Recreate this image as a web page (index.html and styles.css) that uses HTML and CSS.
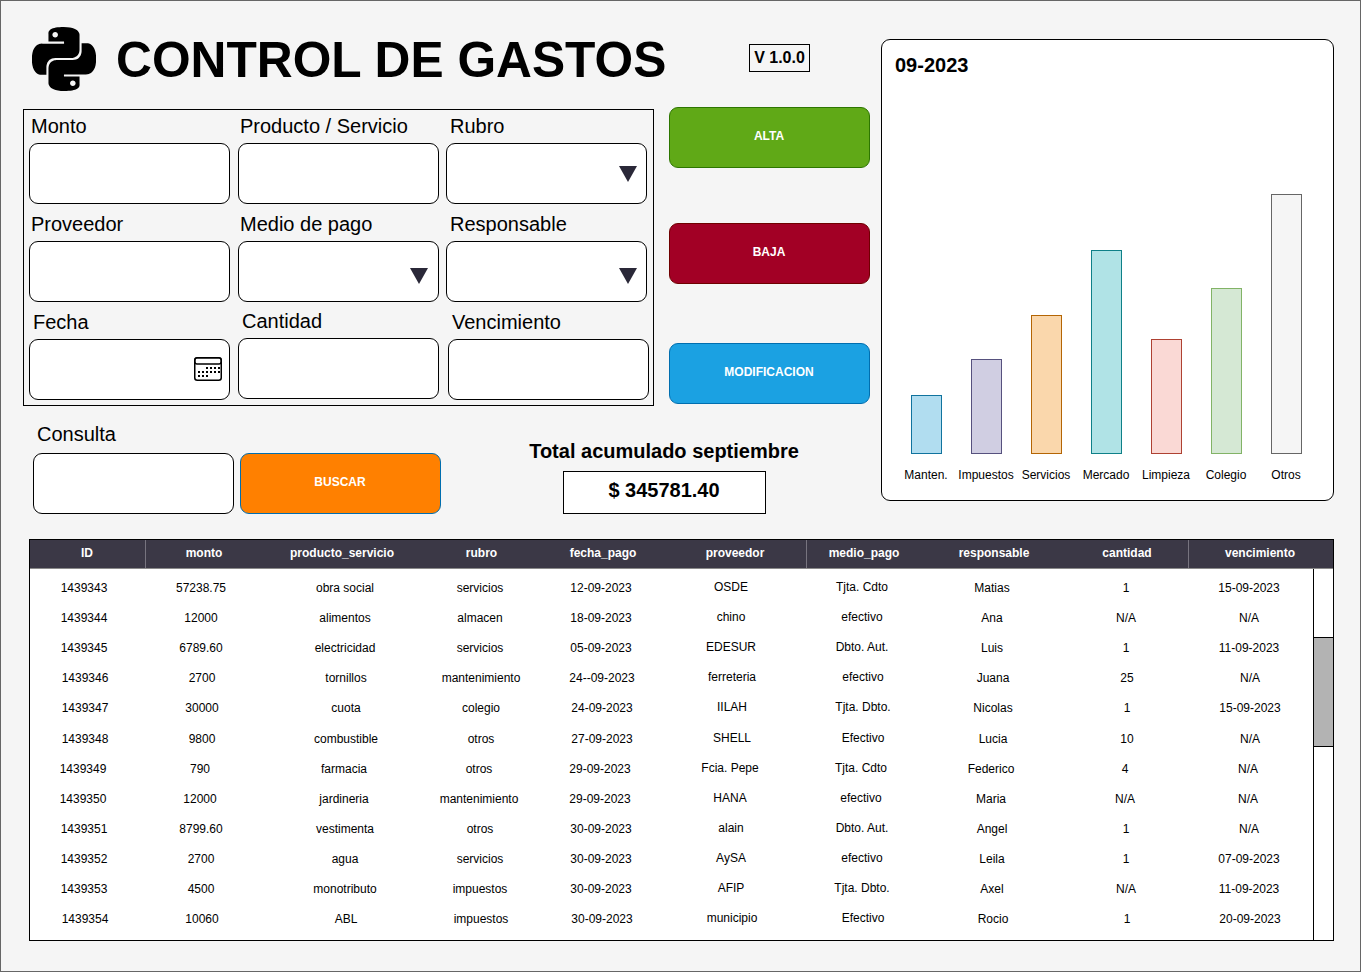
FILE: index.html
```html
<!DOCTYPE html>
<html lang="en">
<head>
    <meta charset="UTF-8">
    <meta name="viewport" content="width=device-width, initial-scale=1.0">
    <title>Control de gastos</title>
    <link rel="stylesheet" href="styles.css">
</head>
<body>
    <div class="page">
        <div class="top">
            <div class="left">
                <div class="header">
                    <svg class="logo" viewBox="0 0 24 24"><path fill="#000" d="M14.25.18l.9.2.73.26.59.3.45.32.34.34.25.34.16.33.1.3.04.26.02.2-.01.13V8.5l-.05.63-.13.55-.21.46-.26.38-.3.31-.33.25-.35.19-.35.14-.33.1-.3.07-.26.04-.21.02H8.77l-.69.05-.59.14-.5.22-.41.27-.33.32-.27.35-.2.36-.15.37-.1.35-.07.32-.04.27-.02.21v3.06H3.17l-.21-.03-.28-.07-.32-.12-.35-.18-.36-.26-.36-.36-.35-.46-.32-.59-.28-.73-.21-.88-.14-1.05-.05-1.23.06-1.22.16-1.04.24-.87.32-.71.36-.57.4-.44.42-.33.42-.24.4-.16.36-.1.32-.05.24-.01h.16l.06.01h8.16v-.83H6.18l-.01-2.75-.02-.37.05-.34.11-.31.17-.28.25-.26.31-.23.38-.2.44-.18.51-.15.58-.12.64-.1.71-.06.77-.04.84-.02 1.27.05zm-6.3 1.98l-.23.33-.08.41.08.41.23.34.33.22.41.09.41-.09.33-.22.23-.34.08-.41-.08-.41-.23-.33-.33-.22-.41-.09-.41.09zm13.09 3.95l.28.06.32.12.35.18.36.27.36.35.35.47.32.59.28.73.21.88.14 1.04.05 1.23-.06 1.23-.16 1.04-.24.86-.32.71-.36.57-.4.45-.42.33-.42.24-.4.16-.36.09-.32.05-.24.02-.16-.01h-8.22v.82h5.84l.01 2.76.02.36-.05.34-.11.31-.17.29-.25.25-.31.24-.38.2-.44.17-.51.15-.58.13-.64.09-.71.07-.77.04-.84.01-1.27-.04-1.07-.14-.9-.2-.73-.25-.59-.3-.45-.33-.34-.34-.25-.34-.16-.33-.1-.3-.04-.25-.02-.2.01-.13v-5.34l.05-.64.13-.54.21-.46.26-.38.3-.32.33-.24.35-.2.35-.14.33-.1.3-.06.26-.04.21-.02.13-.01h5.84l.69-.05.59-.14.5-.21.41-.28.33-.32.27-.35.2-.36.15-.36.1-.35.07-.32.04-.28.02-.21V6.07h2.09l.14.01zm-6.47 14.25l-.23.33-.08.41.08.41.23.33.33.23.41.08.41-.08.33-.23.23-.33.08-.41-.08-.41-.23-.33-.33-.23-.41-.08-.41.08z"/></svg>
                    <h1 class="title">CONTROL DE GASTOS</h1>
                    <div class="version">V 1.0.0</div>
                </div>

                <div class="mid">
                    <div class="form-box">
                        <div class="field"><label class="lbl">Monto</label><div class="input"></div></div>
                        <div class="field"><label class="lbl">Producto / Servicio</label><div class="input"></div></div>
                        <div class="field"><label class="lbl lbl-wide">Rubro</label><div class="input"><span class="arrow"></span></div></div>

                        <div class="field"><label class="lbl">Proveedor</label><div class="input"></div></div>
                        <div class="field"><label class="lbl">Medio de pago</label><div class="input input-low input-inset"><span class="arrow"></span></div></div>
                        <div class="field"><label class="lbl lbl-wide">Responsable</label><div class="input input-low"><span class="arrow"></span></div></div>

                        <div class="field"><label class="lbl lbl-wide">Fecha</label><div class="input">
                            <svg class="calendar" viewBox="0 0 28 24">
                                <rect x="0.75" y="0.75" width="26.5" height="22.5" rx="2.5" fill="#fff" stroke="#000" stroke-width="1.5"/>
                                <rect x="1" y="1" width="26" height="6" rx="2" fill="#fff" stroke="#000" stroke-width="1.5"/>
                                <path d="M12 10h2v2h-2zM16 10h2v2h-2zM20 10h2v2h-2zM24 10h2v2h-2zM4 14h2v2H4zM8 14h2v2H8zM12 14h2v2h-2zM16 14h2v2h-2zM20 14h2v2h-2zM24 14h2v2h-2zM4 18h2v2H4zM8 18h2v2H8zM12 18h2v2h-2z" fill="#000"/>
                            </svg>
                        </div></div>
                        <div class="field field-up"><label class="lbl lbl-wide">Cantidad</label><div class="input"></div></div>
                        <div class="field field-right"><label class="lbl lbl-wide">Vencimiento</label><div class="input"></div></div>
                    </div>

                    <div class="actions">
                        <button class="btn btn-alta">ALTA</button>
                        <button class="btn btn-baja">BAJA</button>
                        <button class="btn btn-mod">MODIFICACION</button>
                    </div>
                </div>

                <div class="bottom">
                    <div class="field consulta"><label class="lbl lbl-wide">Consulta</label><div class="input"></div></div>
                    <button class="btn btn-buscar">BUSCAR</button>
                    <div class="total">
                        <div class="total-label">Total acumulado septiembre</div>
                        <div class="total-value">$ 345781.40</div>
                    </div>
                </div>
            </div>

            <div class="chart">
                <div class="chart-title">09-2023</div>
                <div class="bars">
                    <div class="bar-col"><div class="bar bar-1"></div><span class="bar-label">Manten.</span></div>
                    <div class="bar-col"><div class="bar bar-2"></div><span class="bar-label">Impuestos</span></div>
                    <div class="bar-col"><div class="bar bar-3"></div><span class="bar-label">Servicios</span></div>
                    <div class="bar-col"><div class="bar bar-4"></div><span class="bar-label">Mercado</span></div>
                    <div class="bar-col"><div class="bar bar-5"></div><span class="bar-label">Limpieza</span></div>
                    <div class="bar-col"><div class="bar bar-6"></div><span class="bar-label">Colegio</span></div>
                    <div class="bar-col"><div class="bar bar-7"></div><span class="bar-label">Otros</span></div>
                </div>
            </div>
        </div>

        <div class="table">
            <div class="thead">
                <div class="sep">ID</div>
                <div>monto</div>
                <div>producto_servicio</div>
                <div>rubro</div>
                <div>fecha_pago</div>
                <div class="sep">proveedor</div>
                <div>medio_pago</div>
                <div>responsable</div>
                <div class="sep">cantidad</div>
                <div>vencimiento</div>
            </div>
            <div class="tbody">
                <div class="rows">
                    <div class="row"><span>1439343</span><span>57238.75</span><span>obra social</span><span>servicios</span><span>12-09-2023</span><span class="up">OSDE</span><span class="up">Tjta. Cdto</span><span>Matias</span><span>1</span><span>15-09-2023</span></div>
                    <div class="row"><span>1439344</span><span>12000</span><span>alimentos</span><span>almacen</span><span>18-09-2023</span><span class="up">chino</span><span class="up">efectivo</span><span>Ana</span><span>N/A</span><span>N/A</span></div>
                    <div class="row"><span>1439345</span><span>6789.60</span><span>electricidad</span><span>servicios</span><span>05-09-2023</span><span class="up">EDESUR</span><span class="up">Dbto. Aut.</span><span>Luis</span><span>1</span><span>11-09-2023</span></div>
                    <div class="row row-r"><span>1439346</span><span>2700</span><span>tornillos</span><span>mantenimiento</span><span>24--09-2023</span><span class="up">ferreteria</span><span class="up">efectivo</span><span>Juana</span><span>25</span><span>N/A</span></div>
                    <div class="row row-r"><span>1439347</span><span>30000</span><span>cuota</span><span>colegio</span><span>24-09-2023</span><span class="up">IILAH</span><span class="up">Tjta. Dbto.</span><span>Nicolas</span><span>1</span><span>15-09-2023</span></div>
                    <div class="row row-r"><span>1439348</span><span>9800</span><span>combustible</span><span>otros</span><span>27-09-2023</span><span class="up">SHELL</span><span class="up">Efectivo</span><span>Lucia</span><span>10</span><span>N/A</span></div>
                    <div class="row row-l"><span>1439349</span><span>790</span><span>farmacia</span><span>otros</span><span>29-09-2023</span><span class="up">Fcia. Pepe</span><span class="up">Tjta. Cdto</span><span>Federico</span><span>4</span><span>N/A</span></div>
                    <div class="row row-l"><span>1439350</span><span>12000</span><span>jardineria</span><span>mantenimiento</span><span>29-09-2023</span><span class="up">HANA</span><span class="up">efectivo</span><span>Maria</span><span>N/A</span><span>N/A</span></div>
                    <div class="row"><span>1439351</span><span>8799.60</span><span>vestimenta</span><span>otros</span><span>30-09-2023</span><span class="up">alain</span><span class="up">Dbto. Aut.</span><span>Angel</span><span>1</span><span>N/A</span></div>
                    <div class="row"><span>1439352</span><span>2700</span><span>agua</span><span>servicios</span><span>30-09-2023</span><span class="up">AySA</span><span class="up">efectivo</span><span>Leila</span><span>1</span><span>07-09-2023</span></div>
                    <div class="row"><span>1439353</span><span>4500</span><span>monotributo</span><span>impuestos</span><span>30-09-2023</span><span class="up">AFIP</span><span class="up">Tjta. Dbto.</span><span>Axel</span><span>N/A</span><span>11-09-2023</span></div>
                    <div class="row row-r"><span>1439354</span><span>10060</span><span>ABL</span><span>impuestos</span><span>30-09-2023</span><span class="up">municipio</span><span class="up">Efectivo</span><span>Rocio</span><span>1</span><span>20-09-2023</span></div>
                </div>
                <div class="scrollbar"><div class="thumb"></div></div>
            </div>
        </div>
    </div>
</body>
</html>
```

FILE: styles.css
```css
* {
    box-sizing: border-box;
}

body {
    margin: 0;
    font-family: "Liberation Sans", Arial, sans-serif;
    color: #000;
    background-color: #f5f5f5;
}

.page {
    width: 1361px;
    height: 972px;
    padding-left: 22px;
    border: 1px solid #666;
    background-color: #f5f5f5;
}

.top {
    display: flex;
}

.left {
    width: 847px;
}

/* title row */
.header {
    display: flex;
    align-items: center;
    height: 106px;
    padding-top: 26px;
    padding-bottom: 16px;
}

.logo {
    width: 64px;
    height: 64px;
    margin-left: 9px;
}

.title {
    width: 632px;
    margin: 2px 0 0 20px;
    font-size: 49.7px;
    line-height: 56px;
    font-weight: bold;
    white-space: nowrap;
}

.version {
    width: 61px;
    height: 28px;
    margin-top: -2px;
    margin-left: 1px;
    border: 1px solid #000;
    font-size: 16px;
    font-weight: bold;
    line-height: 26px;
    text-align: center;
}

/* form + buttons */
.mid {
    display: flex;
    gap: 15px;
}

.form-box {
    display: grid;
    grid-template-columns: 201px 201px 201px;
    column-gap: 8px;
    row-gap: 4px;
    width: 631px;
    height: 297px;
    margin-top: 2px;
    padding: 0 5px 5px 5px;
    border: 1px solid #000;
}

.form-box .field:nth-child(3n) {
    margin-left: -1px;
    margin-right: 1px;
}

.form-box .field.field-right {
    margin-left: 1px;
    margin-right: -1px;
}

.field-up {
    margin-top: -1px;
}

.lbl {
    display: block;
    height: 33px;
    padding-left: 2px;
    font-size: 20px;
    line-height: 32px;
}

.lbl-wide {
    padding-left: 4px;
}

.consulta .lbl {
    line-height: 28px;
}

.input {
    display: flex;
    align-items: center;
    justify-content: flex-end;
    height: 61px;
    padding-right: 9px;
    border: 1px solid #000;
    border-radius: 9px;
    background-color: #fff;
}

.input-low {
    padding-top: 8px;
}

.input-inset {
    padding-right: 10px;
}

.arrow {
    width: 0;
    height: 0;
    border-left: 9.5px solid transparent;
    border-right: 9.5px solid transparent;
    border-top: 16px solid #2a2838;
}

.calendar {
    width: 28px;
    height: 24px;
    margin-top: -2px;
    margin-right: -2px;
}

.actions {
    display: flex;
    flex-direction: column;
}

.btn {
    width: 201px;
    height: 61px;
    padding: 0 1px 4px 0;
    border: 1px solid;
    border-radius: 9px;
    color: #fff;
    font-family: inherit;
    font-size: 12px;
    font-weight: bold;
}

.btn-alta {
    background-color: #60a917;
    border-color: #2d7600;
}

.btn-baja {
    margin-top: 55px;
    background-color: #a20025;
    border-color: #6f0000;
}

.btn-mod {
    margin-top: 59px;
    background-color: #1ba1e2;
    border-color: #006eaf;
}

.btn-buscar {
    margin-left: 6px;
    background-color: #ff8000;
    border-color: #006eaf;
}

/* consulta + total */
.bottom {
    display: flex;
    align-items: flex-end;
    margin-top: 14px;
    padding-left: 10px;
}

.consulta {
    width: 201px;
}

.total {
    width: 270px;
    margin-left: 88px;
    text-align: center;
}

.total-label {
    margin-bottom: 8px;
    font-size: 20px;
    font-weight: bold;
    line-height: 24px;
    white-space: nowrap;
}

.total-value {
    width: 203px;
    height: 43px;
    margin: 0 auto;
    border: 1px solid #000;
    background-color: #fff;
    font-size: 20px;
    font-weight: bold;
    line-height: 36px;
}

/* chart */
.chart {
    width: 453px;
    height: 462px;
    margin-top: 38px;
    margin-left: 11px;
    padding: 13px 0 0 13px;
    border: 1px solid #000;
    border-radius: 9px;
    background-color: #fff;
}

.chart-title {
    font-size: 20px;
    font-weight: bold;
    line-height: 24px;
}

.bars {
    display: flex;
    align-items: flex-end;
    height: 405px;
    margin-left: 1px;
}

.bar-col {
    display: flex;
    flex-direction: column;
    align-items: center;
    width: 60px;
}

.bar {
    width: 31px;
    border: 1px solid;
}

.bar-label {
    margin-top: 14px;
    font-size: 12px;
    line-height: 14px;
    white-space: nowrap;
}

.bar-1 { height: 59px; background-color: #b1ddf0; border-color: #10739e; }
.bar-2 { height: 95px; background-color: #d0cee2; border-color: #56517e; }
.bar-3 { height: 139px; background-color: #fad7ac; border-color: #b46504; }
.bar-4 { height: 204px; background-color: #b0e3e6; border-color: #0e8088; }
.bar-5 { height: 115px; background-color: #fad9d5; border-color: #ae4132; }
.bar-6 { height: 166px; background-color: #d5e8d4; border-color: #82b366; }
.bar-7 { height: 260px; background-color: #f5f5f5; border-color: #666; }

/* table */
.table {
    width: 1305px;
    height: 402px;
    margin-top: 25px;
    margin-left: 6px;
    border: 1px solid #000;
    background-color: #fff;
}

.thead {
    display: grid;
    grid-template-columns: 116px 118px 158px 121px 122px 142px 116px 144px 122px 144px;
    height: 29px;
    border-bottom: 1px solid #8a8a8a;
    background-color: #3b3846;
    color: #fff;
    font-size: 12px;
    font-weight: bold;
    line-height: 26px;
    text-align: center;
}

.thead div {
    padding-right: 2px;
}

.thead .sep {
    padding-right: 1px;
    border-right: 1px solid #77747f;
}

.tbody {
    display: flex;
    height: 371px;
}

.rows {
    width: 1283px;
    padding-top: 4px;
    overflow: hidden;
}

.row {
    display: grid;
    grid-template-columns: 108px 126px 162px 108px 134px 126px 136px 124px 144px 102px;
    align-items: center;
    height: 30.1px;
    font-size: 12px;
    text-align: center;
    white-space: nowrap;
}

.row-r {
    padding-left: 1px;
}

.row-l {
    margin-left: -1px;
}

.up {
    padding-bottom: 2px;
}

.scrollbar {
    width: 20px;
    border-left: 1px solid #000;
    background-color: #fff;
}

.thumb {
    height: 110px;
    margin-top: 68px;
    border-top: 1px solid #000;
    border-bottom: 1px solid #000;
    background-color: #b3b3b3;
}
```
